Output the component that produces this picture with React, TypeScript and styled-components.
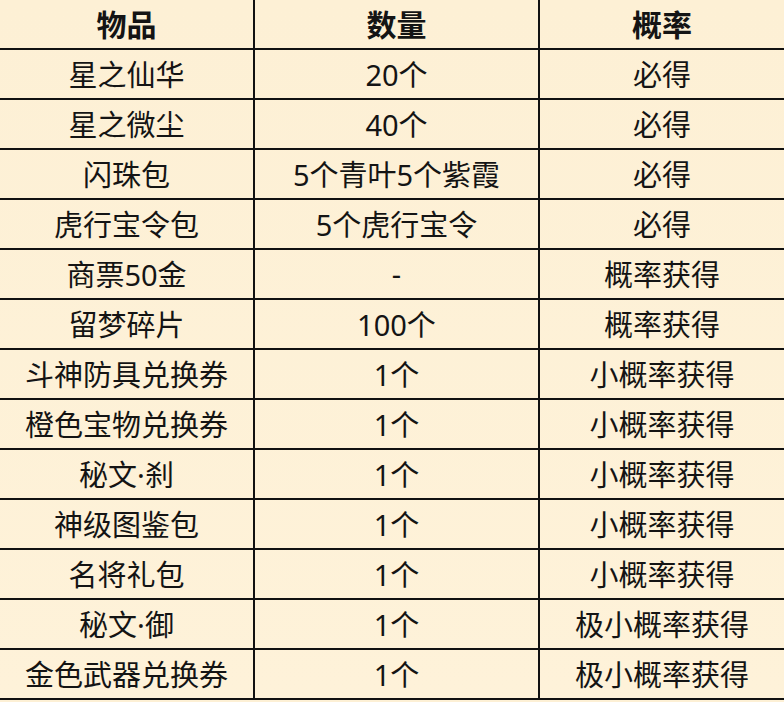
import React from 'react';
import styled, { createGlobalStyle } from 'styled-components';

const GlobalStyle = createGlobalStyle`
  html, body {
    margin: 0;
    padding: 0;
    background: #fdf0d5;
  }
`;

const TableStyled = styled.div`
  display: grid;
  grid-template-columns: 253px 285px 1fr;
  width: 784px;
  background: linear-gradient(180deg, #fdf0d5 0%, #fef2d9 100%);
  font-family: "Noto Sans", "Noto Sans CJK SC", sans-serif;
  color: #141414;
`;

const CellStyled = styled.div<{ $head?: boolean; $first?: boolean }>`
  box-sizing: border-box;
  height: 50px;
  display: flex;
  align-items: center;
  justify-content: center;
  padding-bottom: 2px;
  border-bottom: 2px solid #111;
  border-left: ${({ $first }) => ($first ? 'none' : '2px solid #111')};
  font-size: ${({ $head }) => ($head ? '30px' : '29px')};
  font-weight: ${({ $head }) => ($head ? 700 : 400)};
  white-space: nowrap;
`;

const rows: [string, string, string][] = [
  ['星之仙华', '20个', '必得'],
  ['星之微尘', '40个', '必得'],
  ['闪珠包', '5个青叶5个紫霞', '必得'],
  ['虎行宝令包', '5个虎行宝令', '必得'],
  ['商票50金', '-', '概率获得'],
  ['留梦碎片', '100个', '概率获得'],
  ['斗神防具兑换券', '1个', '小概率获得'],
  ['橙色宝物兑换券', '1个', '小概率获得'],
  ['秘文·刹', '1个', '小概率获得'],
  ['神级图鉴包', '1个', '小概率获得'],
  ['名将礼包', '1个', '小概率获得'],
  ['秘文·御', '1个', '极小概率获得'],
  ['金色武器兑换券', '1个', '极小概率获得'],
];

const App: React.FC = () => (
  <>
    <GlobalStyle />
    <TableStyled>
      <CellStyled $head $first>物品</CellStyled>
      <CellStyled $head>数量</CellStyled>
      <CellStyled $head>概率</CellStyled>
      {rows.map(([item, count, rate]) => (
        <React.Fragment key={item}>
          <CellStyled $first>{item}</CellStyled>
          <CellStyled>{count}</CellStyled>
          <CellStyled>{rate}</CellStyled>
        </React.Fragment>
      ))}
    </TableStyled>
  </>
);

export default App;
